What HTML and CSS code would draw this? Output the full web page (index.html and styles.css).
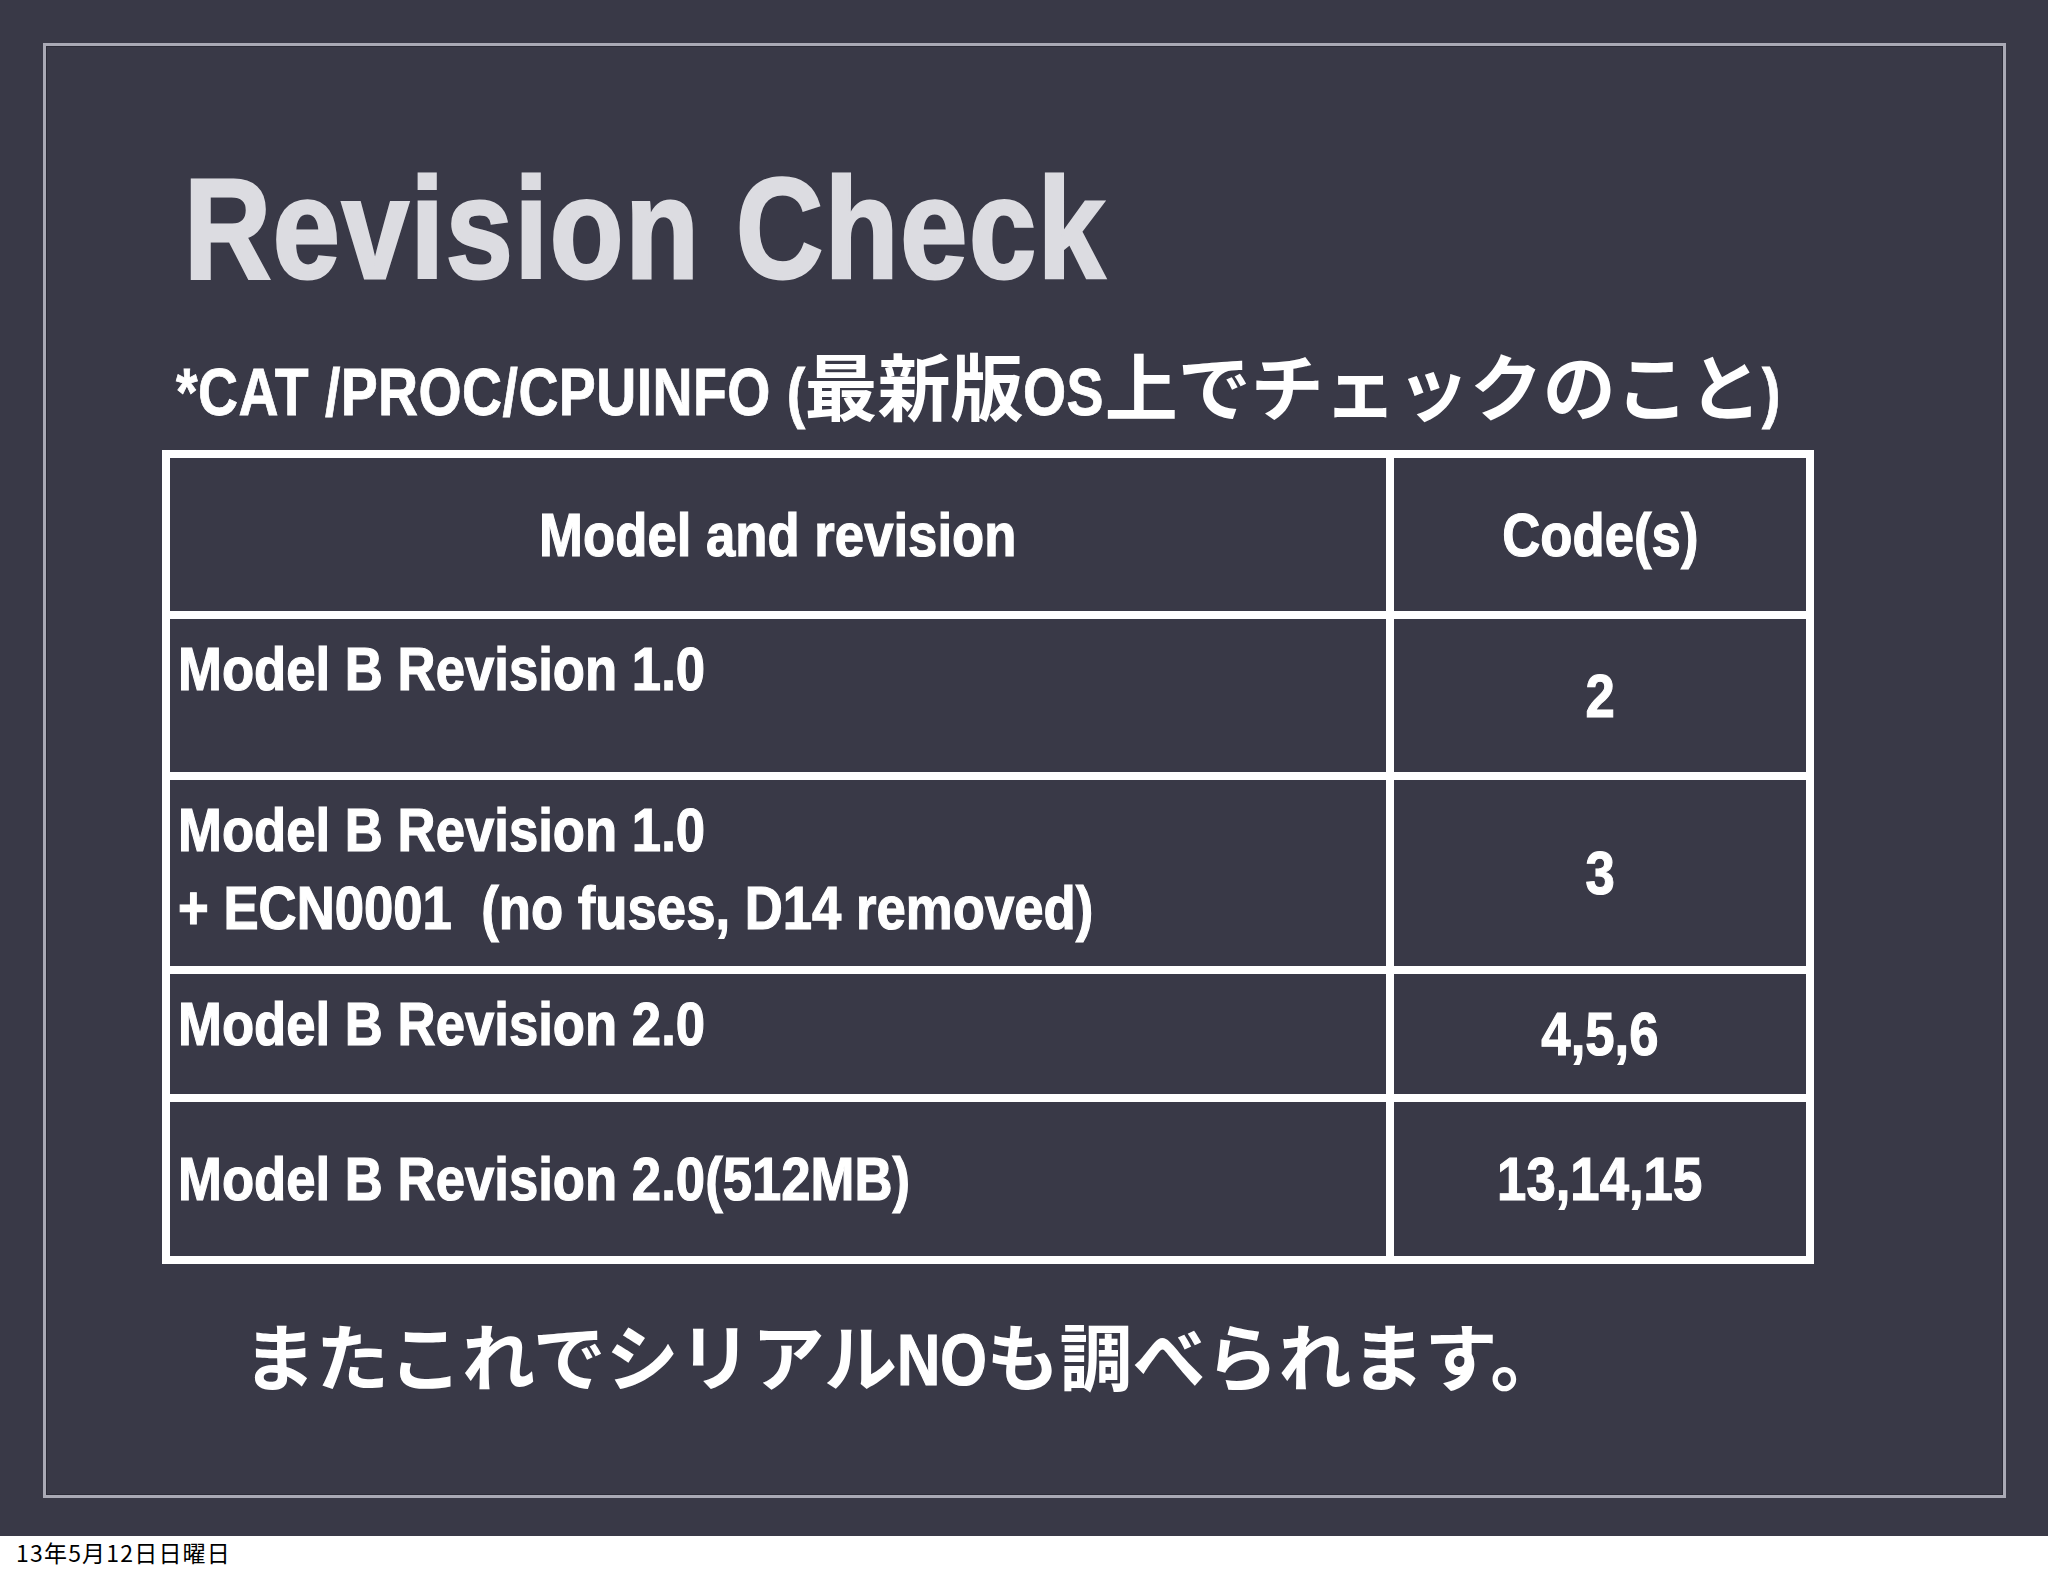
FILE: index.html
```html
<!DOCTYPE html>
<html lang="ja">
<head>
<meta charset="utf-8">
<title>Revision Check</title>
<link rel="stylesheet" href="styles.css">
</head>
<body>
<div class="slide">
  <div class="frame">
    <h1 class="title">Revision Check</h1>
    <p class="subtitle"><span class="cond seg-cmd">*CAT /PROC/CPUINFO (</span><span class="jp">最新版</span><span class="cond seg-os">OS</span><span class="jp">上でチェックのこと</span><span class="cond">)</span></p>
    <div class="table">
      <div class="cell head"><span class="cond mid-o">Model and revision</span></div>
      <div class="cell head"><span class="cond mid-o">Code(s)</span></div>
      <div class="cell model"><span class="cond">Model B Revision 1.0</span></div>
      <div class="cell code"><span class="cond mid-o">2</span></div>
      <div class="cell model"><span class="cond">Model B Revision 1.0<br>+ ECN0001&nbsp; (no fuses, D14 removed)</span></div>
      <div class="cell code"><span class="cond mid-o">3</span></div>
      <div class="cell model"><span class="cond">Model B Revision 2.0</span></div>
      <div class="cell code"><span class="cond mid-o">4,5,6</span></div>
      <div class="cell model mid"><span class="cond">Model B Revision 2.0(512MB)</span></div>
      <div class="cell code"><span class="cond mid-o">13,14,15</span></div>
    </div>
    <p class="note">またこれでシリアル<span class="cond seg-no">NO</span>も調べられます。</p>
  </div>
</div>
<div class="date">13年5月12日日曜日</div>
</body>
</html>
```
FILE: styles.css
```css
html, body {
  margin: 0;
  padding: 0;
  background: #ffffff;
}

body {
  width: 2048px;
  height: 1576px;
  overflow: hidden;
}

.slide {
  width: 2048px;
  height: 1536px;
  background: #393947;
  box-sizing: border-box;
  padding: 43px 42px 38px 43px;
}

.frame {
  height: 1455px;
  box-sizing: border-box;
  border: 3px solid #a9a9b5;
  box-shadow: inset 0 0 0 1px #2b2b37;
  display: flex;
  flex-direction: column;
  align-items: flex-start;
}

/* condensed bold sans: Liberation Sans Bold narrowed like Helvetica Condensed */
.cond {
  display: inline-block;
  transform: scaleX(0.84);
  transform-origin: 0 50%;
  white-space: nowrap;
  -webkit-text-stroke: 1.2px currentColor;
}

.cond.mid-o {
  transform-origin: 50% 50%;
}

.title {
  margin: 108px 0 0 138px;
  font-family: "Liberation Sans", "Noto Sans CJK JP", sans-serif;
  font-weight: 700;
  font-size: 142px;
  line-height: 150px;
  letter-spacing: 2px;
  color: #dcdce1;
  white-space: nowrap;
  transform: scaleX(0.85);
  transform-origin: 0 0;
  -webkit-text-stroke: 3px #dcdce1;
}

.subtitle {
  margin: 51px 0 0 130px;
  height: 72px;
  font-family: "Liberation Sans", "Noto Sans CJK JP", sans-serif;
  font-weight: 700;
  font-size: 66px;
  line-height: 70px;
  color: #ffffff;
  white-space: nowrap;
}

.subtitle .cond {
  letter-spacing: 0.5px;
  -webkit-text-stroke: 0.8px currentColor;
}

.jp {
  font-size: 73px;
}

.subtitle .seg-cmd {
  margin-right: -121px;
}

.subtitle .seg-os {
  margin-right: -15px;
}

.table {
  margin: 23px 0 0 116px;
  width: 1652px;
  box-sizing: border-box;
  display: grid;
  grid-template-columns: 1216px 412px;
  grid-template-rows: 153px 153px 186px 120px 154px;
  gap: 8px;
  padding: 8px;
  background: #ffffff;
}

.cell {
  background: #393947;
  font-family: "Liberation Sans", "Noto Sans CJK JP", sans-serif;
  font-weight: 700;
  font-size: 62px;
  line-height: 78px;
  color: #ffffff;
  white-space: nowrap;
}

.cell .cond {
  transform: scaleX(0.85);
}

.head,
.code {
  display: flex;
  align-items: center;
  justify-content: center;
}

.model {
  padding: 11px 0 0 8px;
}

.model.mid {
  padding-top: 0;
  display: flex;
  align-items: center;
}

.note {
  margin: 59px 0 0 197px;
  font-family: "Liberation Sans", "Noto Sans CJK JP", sans-serif;
  font-weight: 700;
  font-size: 73px;
  line-height: 73px;
  color: #ffffff;
  white-space: nowrap;
}

.note .cond {
  transform: scaleX(0.82);
}

.seg-no {
  margin-right: -20px;
}

.date {
  height: 40px;
  padding-left: 16px;
  font-family: "Noto Sans CJK JP", "Liberation Sans", sans-serif;
  font-size: 23px;
  line-height: 32px;
  letter-spacing: 1.2px;
  color: #000000;
}
```
